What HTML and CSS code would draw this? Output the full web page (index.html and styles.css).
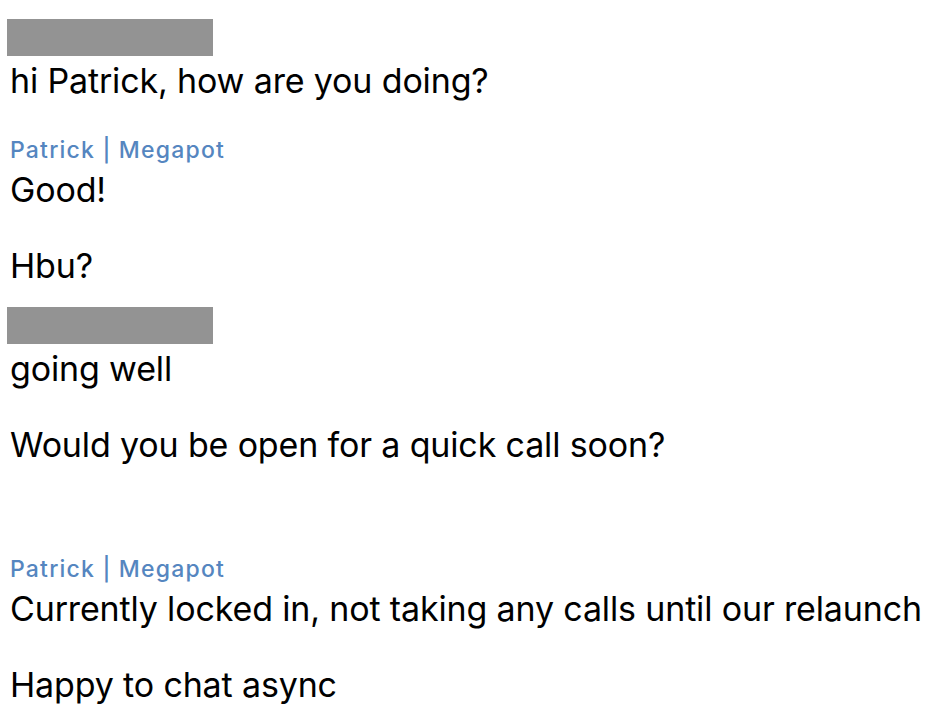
FILE: index.html
```html
<!DOCTYPE html>
<html lang="en">
<head>
<meta charset="utf-8">
<title>Chat</title>
<link rel="stylesheet" href="styles.css">
</head>
<body>
<main class="chat">
  <section class="group me first">
    <div class="redacted"></div>
    <p class="msg">hi Patrick, how are you doing?</p>
  </section>
  <section class="group them">
    <div class="sender">Patrick | Megapot</div>
    <p class="msg">Good!</p>
    <p class="msg">Hbu?</p>
  </section>
  <section class="group me">
    <div class="redacted"></div>
    <p class="msg">going well</p>
    <p class="msg">Would you be open for a quick call soon?</p>
  </section>
  <section class="group them later">
    <div class="sender">Patrick | Megapot</div>
    <p class="msg">Currently locked in, not taking any calls until our relaunch</p>
    <p class="msg">Happy to chat async</p>
  </section>
</main>
</body>
</html>
```
FILE: styles.css
```css
html, body {
  margin: 0;
  padding: 0;
  background: #ffffff;
}
body {
  font-family: Inter, "Liberation Sans", Arial, sans-serif;
  color: #000000;
}
.chat {
  padding: 19px 0 0 10px;
  display: flex;
  flex-direction: column;
}
.group {
  display: flex;
  flex-direction: column;
  align-items: flex-start;
}
.group.me { margin-top: 21px; }
.group.them { margin-top: 35px; }
.group.first { margin-top: 0; }
.group.later { margin-top: 90px; }
.redacted {
  width: 206px;
  height: 37px;
  margin-left: -3px;
  background: #939393;
  margin-bottom: 5px;
}
.sender {
  font-size: 23px;
  font-weight: 500;
  line-height: 28px;
  letter-spacing: 1.2px;
  color: #5586c0;
  margin-bottom: 6px;
}
.msg {
  margin: 0;
  font-size: 34px;
  line-height: 40px;
  letter-spacing: -0.15px;
  white-space: nowrap;
}
.msg + .msg { margin-top: 36px; }
```
